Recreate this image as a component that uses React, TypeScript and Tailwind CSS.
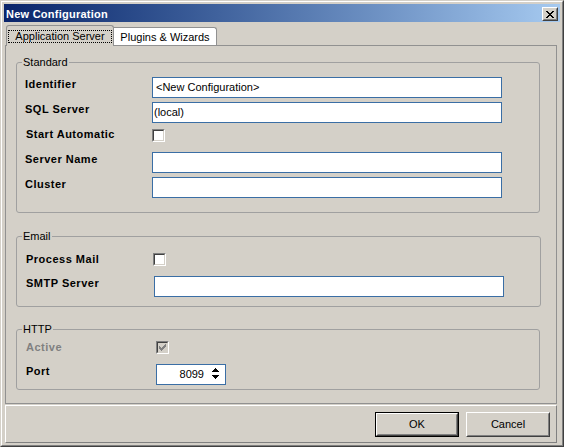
import React from 'react';

const Check = ({ color }: { color: string }) => (
  <svg width="7" height="7" viewBox="0 0 7 7" shapeRendering="crispEdges" className="block">
    {[2, 3, 4, 3, 2, 1, 0].map((y, x) => (
      <rect key={x} x={x} y={y} width="1" height="3" fill={color} />
    ))}
  </svg>
);

const Checkbox = ({ checked = false, disabled = false, className = '' }: { checked?: boolean; disabled?: boolean; className?: string }) => (
  <div className={`h-[13px] w-[13px] border border-t-[#808080] border-l-[#808080] border-b-white border-r-white ${className}`}>
    <div
      className={`flex h-full w-full items-center justify-center border border-t-[#404040] border-l-[#404040] border-b-[#d4d0c8] border-r-[#d4d0c8] ${
        disabled ? 'bg-[#d4d0c8]' : 'bg-white'
      }`}
    >
      {checked && <Check color={disabled ? '#808080' : '#000000'} />}
    </div>
  </div>
);

const TextBox = ({ value = '', className = '' }: { value?: string; className?: string }) => (
  <div className={`h-[21px] border border-[#3a6ea5] bg-white leading-[19px] whitespace-pre ${className}`}>{value}</div>
);

const Label = ({ children, className = '' }: { children: React.ReactNode; className?: string }) => (
  <div className={`shrink-0 pt-px font-bold leading-[13px] tracking-[0.5px] ${className}`}>{children}</div>
);

const CloseGlyph = () => {
  // classic 8x7 caption "x"
  const rows = ['##....##', '.##..##.', '..####..', '...##...', '..####..', '.##..##.', '##....##'];
  return (
    <svg width="8" height="7" viewBox="0 0 8 7" shapeRendering="crispEdges" className="block">
      {rows.map((r, y) =>
        r.split('').map((c, x) => (c === '#' ? <rect key={`${x}-${y}`} x={x} y={y} width="1" height="1" fill="#000" /> : null))
      )}
    </svg>
  );
};

const Arrow = ({ down = false }: { down?: boolean }) => {
  const rows = down ? [[0, 7], [1, 5], [2, 3], [3, 1]] : [[3, 1], [2, 3], [1, 5], [0, 7]];
  return (
    <svg width="7" height="4" viewBox="0 0 7 4" shapeRendering="crispEdges" className="block">
      {rows.map(([x, w], y) => (
        <rect key={y} x={x} y={y} width={w} height="1" fill="#000" />
      ))}
    </svg>
  );
};

const Button = ({ label, isDefault = false }: { label: string; isDefault?: boolean }) => {
  const inner = (
    <div className="h-full border border-t-white border-l-white border-b-[#404040] border-r-[#404040]">
      <div className="flex h-full items-center justify-center border border-t-[#d4d0c8] border-l-[#d4d0c8] border-b-[#808080] border-r-[#808080] leading-[13px]">
        {label}
      </div>
    </div>
  );
  return isDefault ? (
    <div className="h-[25px] w-[84px] border border-black">{inner}</div>
  ) : (
    <div className="h-[25px] w-[84px]">{inner}</div>
  );
};

export default function App() {
  return (
    <div className="h-[447px] w-[564px] bg-[#d4d0c8] font-['Liberation_Sans',Arial,sans-serif] text-[11px] text-black">
      <div className="h-full w-full border border-t-[#d4d0c8] border-l-[#d4d0c8] border-b-[#404040] border-r-[#404040]">
        <div className="h-full w-full border border-t-white border-l-white border-b-[#808080] border-r-[#808080] p-[2px]">
          {/* title bar */}
          <div className="flex h-[18px] items-start justify-between bg-linear-to-r from-[#0a246a] to-[#a6caf0]">
            <span className="pl-[2px] pt-[4px] font-bold leading-[13px] tracking-[0.25px] text-white">New Configuration</span>
            <div className="mr-[2px] mt-[3px] h-[14px] w-[16px] border border-t-white border-l-white border-b-[#404040] border-r-[#404040] bg-[#d4d0c8]">
              <div className="flex h-full w-full items-center justify-center border border-t-[#d4d0c8] border-l-[#d4d0c8] border-b-[#808080] border-r-[#808080]">
                <CloseGlyph />
              </div>
            </div>
          </div>

          {/* tabs */}
          <div className="mt-[2px] flex h-[21px] items-start pl-[2px]">
            <div className="relative top-px z-10 flex h-[21px] w-[108px] justify-center rounded-t-[3px] border border-b-0 border-[#919191] bg-[#d4d0c8] pt-[4px]">
              <span className="h-[13px] border border-dotted border-black px-[6px] leading-[11px]">Application Server</span>
            </div>
            <div className="mt-[3px] flex h-[18px] w-[103px] justify-center rounded-tr-[3px] border border-b-0 border-l-0 border-[#919191] bg-white pt-[3px]">
              <span className="leading-[13px]">Plugins &amp; Wizards</span>
            </div>
          </div>

          {/* tab panel */}
          <div className="ml-px h-[359px] w-[552px] border border-[#919191] pl-[10px] pt-[10px]">
            <fieldset className="w-[524px] rounded-[3px] border border-[#a0a0a0] px-[8px] pb-[14px] pt-[9px]">
              <legend className="ml-[-3px] px-px leading-[12px]">Standard</legend>
              <div className="flex flex-col gap-[4px]">
                <div className="flex items-start">
                  <Label className="w-[127px]">Identifier</Label>
                  <TextBox value="<New Configuration>" className="w-[350px] pl-[3px]" />
                </div>
                <div className="flex items-start">
                  <Label className="w-[127px]">SQL Server</Label>
                  <TextBox value="(local)" className="w-[350px] pl-px" />
                </div>
                <div className="flex h-[21px] items-start">
                  <Label className="w-[127px] pl-px">Start Automatic</Label>
                  <Checkbox className="mt-[2px]" />
                </div>
                <div className="flex items-start">
                  <Label className="w-[127px]">Server Name</Label>
                  <TextBox className="w-[350px]" />
                </div>
                <div className="flex items-start">
                  <Label className="w-[127px]">Cluster</Label>
                  <TextBox className="w-[350px]" />
                </div>
              </div>
            </fieldset>

            <fieldset className="mt-[17px] w-[525px] rounded-[3px] border border-[#a0a0a0] px-[9px] pb-[9px] pt-[10px]">
              <legend className="ml-[-4px] px-px leading-[12px]">Email</legend>
              <div className="flex flex-col gap-[4px]">
                <div className="flex h-[20px] items-start">
                  <Label className="w-[127px]">Process Mail</Label>
                  <Checkbox className="mt-px" />
                </div>
                <div className="flex items-start">
                  <Label className="w-[128px]">SMTP Server</Label>
                  <TextBox className="w-[350px]" />
                </div>
              </div>
            </fieldset>

            <fieldset className="mt-[16px] w-[524px] rounded-[3px] border border-[#a0a0a0] px-[9px] pb-[4px] pt-[5px]">
              <legend className="ml-[-4px] px-px leading-[12px]">HTTP</legend>
              <div className="flex flex-col gap-[4px]">
                <div className="flex h-[20px] items-start">
                  <Label className="w-[130px] text-[#808080]">Active</Label>
                  <Checkbox checked disabled className="mt-px" />
                </div>
                <div className="flex items-start">
                  <Label className="w-[130px]">Port</Label>
                  <div className="flex h-[21px] w-[70px] border border-[#3a6ea5] bg-white">
                    <div className="w-[47px] text-right leading-[19px]">8099</div>
                    <div className="ml-[2px] flex w-[19px] flex-col items-center justify-center gap-[3px] pb-[2px]">
                      <Arrow />
                      <Arrow down />
                    </div>
                  </div>
                </div>
              </div>
            </fieldset>
          </div>

          {/* button bar */}
          <div className="ml-px mt-px flex h-[38px] w-[552px] items-start justify-end gap-[7px] border border-t-white border-l-white border-b-[#808080] border-r-[#808080] pr-[6px] pt-[6px]">
            <Button label="OK" isDefault />
            <Button label="Cancel" />
          </div>
        </div>
      </div>
    </div>
  );
}
